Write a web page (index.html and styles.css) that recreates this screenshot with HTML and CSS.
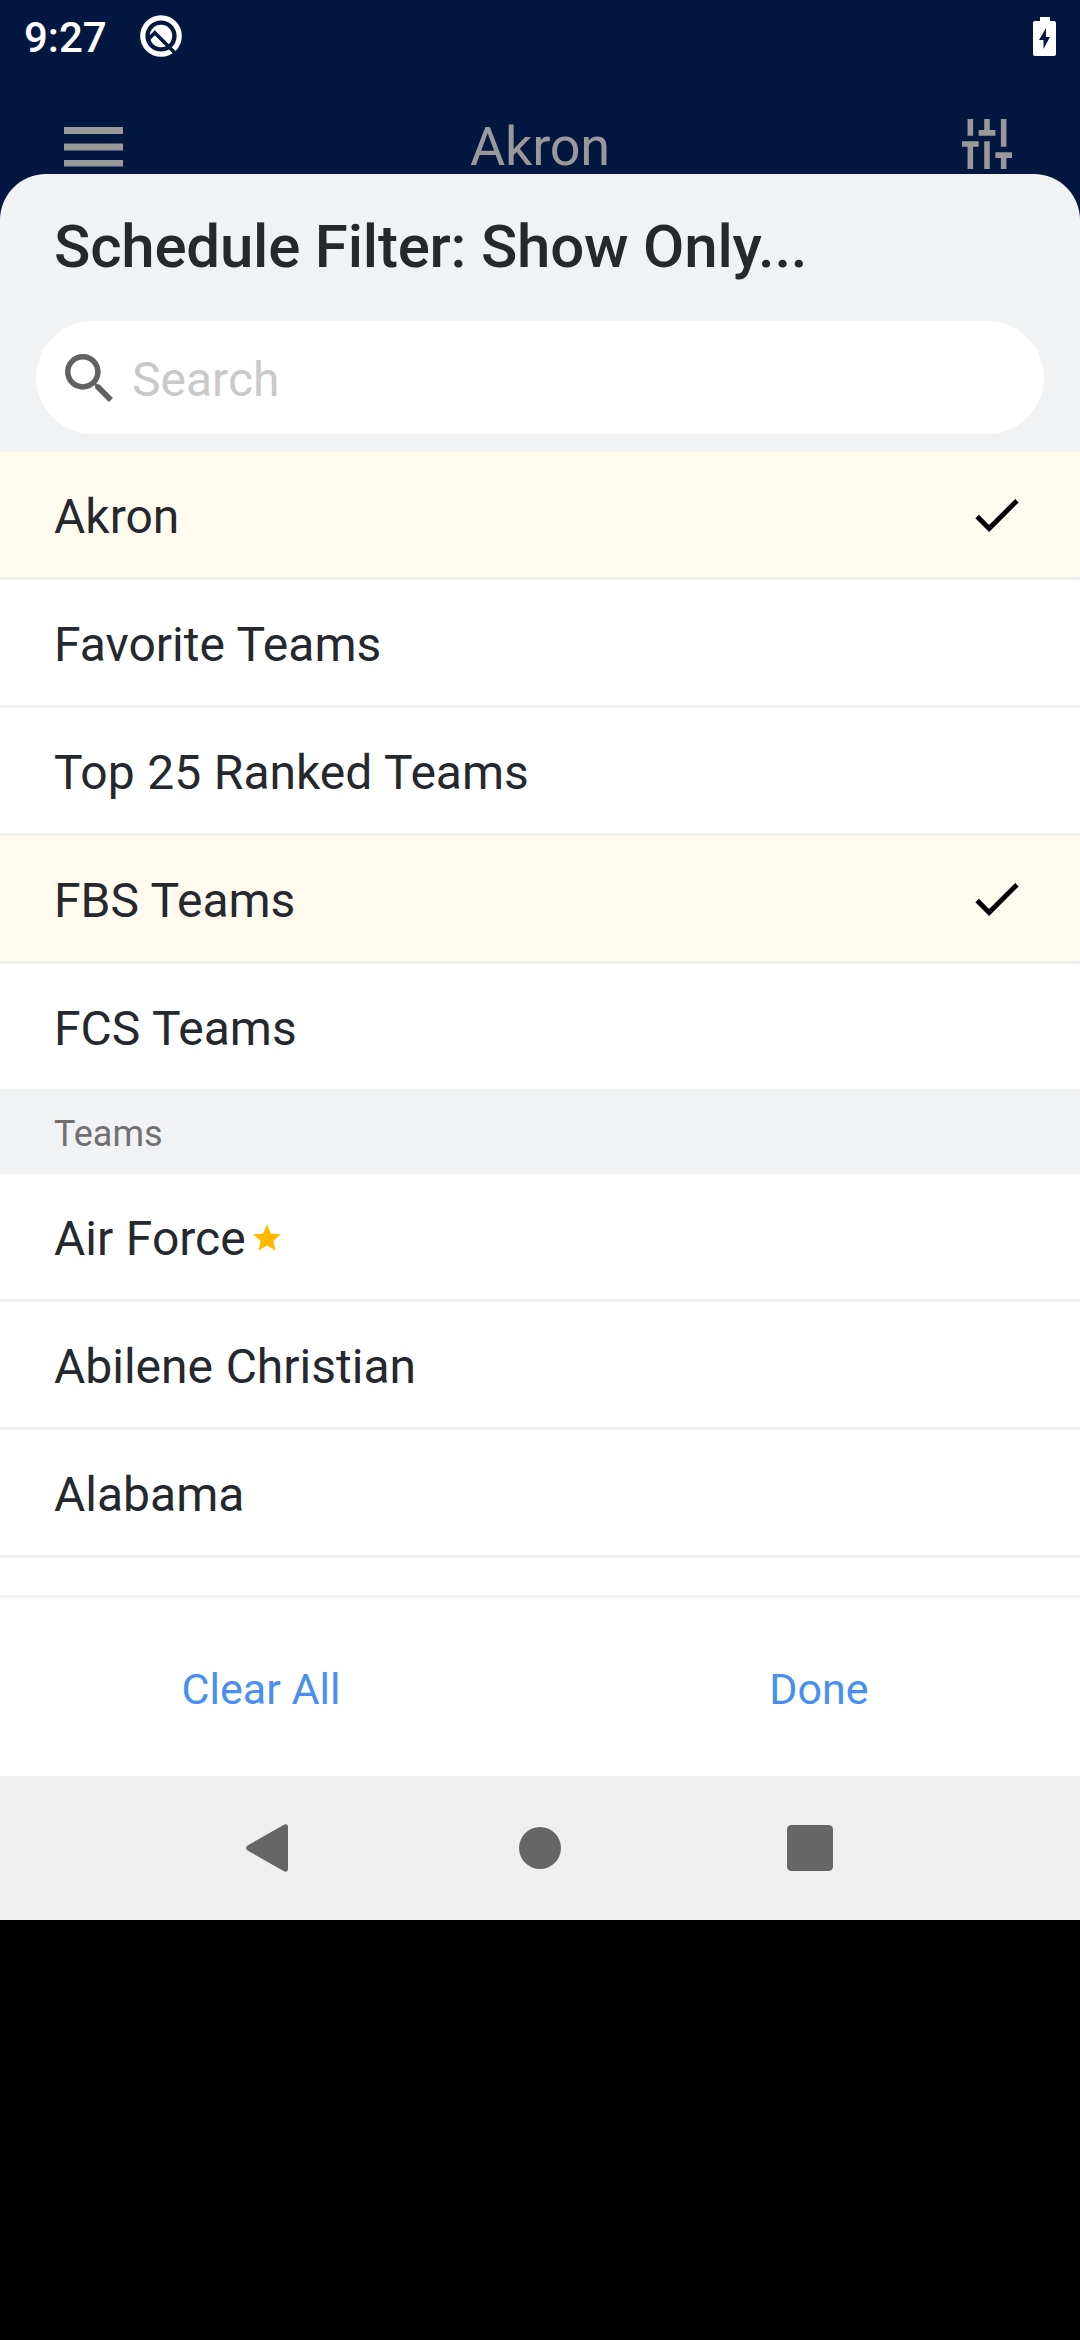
FILE: index.html
```html
<!DOCTYPE html>
<html lang="en">
<head>
<meta charset="utf-8">
<title>Schedule Filter</title>
<link rel="stylesheet" href="styles.css">
</head>
<body>
<div class="backdrop">
  <div class="status">
    <span class="clock">9:27</span>
    <svg class="status-logo" viewBox="0 0 42 42">
      <circle cx="21" cy="21" r="18.2" fill="none" stroke="#fff" stroke-width="5.2"/>
      <circle cx="21" cy="21" r="11.2" fill="#fff"/>
      <path d="M9 23.500 14.800 17.700 34.500 37.500" fill="none" stroke="#031741" stroke-width="3.600"/>
    </svg>
    <svg class="battery" viewBox="0 0 23 39">
      <path fill="#fff" d="M7 0h10v4h4a2 2 0 0 1 2 2v31a2 2 0 0 1-2 2H2a2 2 0 0 1-2-2V6a2 2 0 0 1 2-2h5z"/>
      <path fill="#031741" d="M13 11v9h4l-6.500 12v-9H6z"/>
    </svg>
  </div>
  <header class="appbar">
    <svg class="menu" viewBox="0 0 59 40"><path fill="#999" d="M0 0h59v7H0zM0 16.500h59v7H0zM0 33h59v6.500H0z"/></svg>
    <span class="appbar-title">Akron</span>
    <svg class="tune" viewBox="0 0 18 18"><path fill="#999" d="M2 0h2v6H2zM0 8h6v2H4v8H2v-8H0zM8 0h2v4h2v2H6V4h2zM8 8h2v10H8zM14 0h2v10h-2zM12 12h6v2h-2v4h-2v-4h-2z"/></svg>
  </header>
</div>
<main class="sheet">
  <h1 class="title">Schedule Filter: Show Only...</h1>
  <div class="search">
    <svg class="search-icon" viewBox="3 3 17.500 17.500"><path fill="#616161" d="M15.500 14h-.79l-.28-.27A6.471 6.471 0 0 0 16 9.500 6.500 6.500 0 1 0 9.500 16c1.610 0 3.090-.59 4.230-1.570l.27.28v.79l5 4.990L20.490 19l-4.990-5zm-6 0C7.010 14 5 11.990 5 9.500S7.010 5 9.500 5 14 7.010 14 9.500 11.990 14 9.500 14z"/></svg>
    <span class="placeholder">Search</span>
  </div>
  <div class="list">
    <div class="row selected"><span>Akron</span><svg class="check" viewBox="3.400 5.600 17.600 13.400"><path d="M9 16.170 4.830 12l-1.420 1.410L9 19 21 7l-1.410-1.410z"/></svg></div>
    <div class="row"><span>Favorite Teams</span></div>
    <div class="row"><span>Top 25 Ranked Teams</span></div>
    <div class="row selected"><span>FBS Teams</span><svg class="check" viewBox="3.400 5.600 17.600 13.400"><path d="M9 16.170 4.830 12l-1.420 1.410L9 19 21 7l-1.410-1.410z"/></svg></div>
    <div class="row last"><span>FCS Teams</span></div>
    <div class="section"><span>Teams</span></div>
    <div class="row"><span>Air Force</span><svg class="star" viewBox="2 2 20 19"><path fill="#ffba00" d="M12 17.270 18.180 21l-1.640-7.030L22 9.240l-7.190-.61L12 2 9.190 8.630 2 9.240l5.460 4.730L5.820 21z"/></svg></div>
    <div class="row"><span>Abilene Christian</span></div>
    <div class="row"><span>Alabama</span></div>
  </div>
  <footer class="actions">
    <span class="action">Clear All</span>
    <span class="action">Done</span>
  </footer>
</main>
<nav class="navbar">
  <svg class="back" viewBox="0 0 42 48"><path fill="#666" d="M38 .7 1.500 21.500q-3 2.500 0 5L38 47.300q4 1.500 4-2.300V3q0-3.800-4-2.300z"/></svg>
  <svg class="home" viewBox="0 0 42 42"><circle cx="21" cy="21" r="21" fill="#666"/></svg>
  <svg class="recent" viewBox="0 0 46 46"><rect width="46" height="46" rx="4.500" fill="#666"/></svg>
</nav>
</body>
</html>
```

FILE: styles.css
```css
* { box-sizing: border-box; }
body { margin: 0; width: 1080px; height: 2340px; background: #000; font-family: Roboto, sans-serif; color: #25282d; overflow: hidden; }
svg { display: block; flex: none; }
span, h1 { white-space: nowrap; }
.backdrop { height: 222px; background: #031741; }
.status { height: 72px; padding: 0 24px; display: flex; align-items: center; }
.clock { color: #fff; font-size: 42px; font-weight: 500; line-height: 50px; padding-top: 3px; }
.status-logo { width: 42px; height: 42px; margin-left: 33px; }
.battery { width: 23px; height: 39px; margin-left: auto; }
.appbar { height: 150px; padding: 0 68px 0 68px; display: grid; grid-template-columns: 1fr auto 1fr; align-items: start; }
.menu { width: 59px; height: 40px; margin: 55px 0 0 -4px; }
.appbar-title { color: #999; font-size: 54px; line-height: 64px; margin-top: 43px; letter-spacing: -0.200px; }
.tune { width: 50px; height: 50px; margin-top: 47px; justify-self: end; }
.sheet { height: 1602px; margin-top: -48px; border-radius: 46px 46px 0 0; background: #f1f2f4; display: flex; flex-direction: column; overflow: hidden; }
.title { margin: 0; height: 147px; padding: 38px 54px 0; font-size: 60px; font-weight: 500; line-height: 70px; letter-spacing: -0.200px; }
.search { flex: none; height: 113px; margin: 0 36px 18px; padding-left: 29px; border-radius: 57px; background: #fff; display: flex; align-items: center; }
.search-icon { width: 48px; height: 48px; }
.placeholder { margin-left: 19px; padding-top: 4px; font-size: 48px; line-height: 56px; color: #c9c9c9; }
.list { height: 1143px; flex: none; background: #fff; overflow: hidden; }
.row { height: 128px; padding: 4px 61px 0 54px; border-bottom: 3px solid #eee; background: #fff; display: flex; align-items: center; font-size: 48px; line-height: 56px; word-spacing: 0.700px; }
.selected { background: #fffbef; }
.last { border-color: #f1f2f4; }
.check { width: 44px; height: 33px; margin: -2px 0 0 auto; }
.star { width: 28px; height: 27px; margin: -2px 0 0 7px; }
.section { height: 82px; padding: 1px 54px 0; background: #f1f2f4; display: flex; align-items: center; font-size: 36px; line-height: 42px; color: #707070; }
.actions { flex: 1; border-top: 3px solid #f2f2f3; background: #fff; display: grid; grid-template-columns: 1fr 1fr; gap: 36px; }
.action { text-align: center; color: #488ff0; font-size: 43px; line-height: 52px; padding-top: 65px; }
.navbar { height: 144px; background: #efefef; display: flex; align-items: center; padding-left: 246px; }
.back { width: 42px; height: 48px; }
.home { width: 42px; height: 42px; margin-left: 231px; }
.recent { width: 46px; height: 46px; margin-left: 226px; }
```
